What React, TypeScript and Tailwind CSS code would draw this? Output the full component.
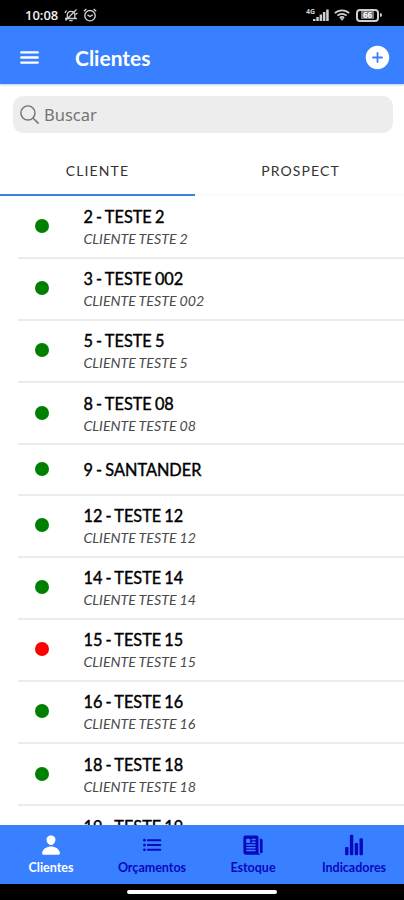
import { clsx } from "clsx";
import type { ReactNode } from "react";
import { IoAddCircle, IoList, IoMenu, IoNewspaper, IoPerson, IoSearchOutline, IoStatsChart } from "react-icons/io5";

type Customer = {
  id: number;
  name: string;
  description?: string;
  blocked?: boolean;
};

const customers: Customer[] = [
  { id: 2, name: "TESTE 2", description: "CLIENTE TESTE 2" },
  { id: 3, name: "TESTE 002", description: "CLIENTE TESTE 002" },
  { id: 5, name: "TESTE 5", description: "CLIENTE TESTE 5" },
  { id: 8, name: "TESTE 08", description: "CLIENTE TESTE 08" },
  { id: 9, name: "SANTANDER" },
  { id: 12, name: "TESTE 12", description: "CLIENTE TESTE 12" },
  { id: 14, name: "TESTE 14", description: "CLIENTE TESTE 14" },
  { id: 15, name: "TESTE 15", description: "CLIENTE TESTE 15", blocked: true },
  { id: 16, name: "TESTE 16", description: "CLIENTE TESTE 16" },
  { id: 18, name: "TESTE 18", description: "CLIENTE TESTE 18" },
  { id: 19, name: "TESTE 19", description: "CLIENTE TESTE 19" }
];

function StatusBar() {
  return (
    <div className="flex h-[26px] shrink-0 items-center bg-black pl-[25px] pr-[22px] pt-1 text-[#cfcfcf]">
      <span className="w-[39px] font-['Open_Sans',sans-serif] text-[13px] font-semibold leading-none text-[#eeeeee]">10:08</span>
      <svg className="h-[14px] w-[14px]" viewBox="0 0 14 14" fill="none" stroke="currentColor" strokeWidth="1.3" aria-hidden="true">
        <path d="M3.300 10.200V6.500a3.800 3.800 0 0 1 7.500 0v3.700M1 10.500h12M5.300 12.700h3.400M1.500 12.500 12.500 1.500M1 5l1.500-2.500M11.500 6.500 13.500 5" />
      </svg>
      <svg className="ml-[5px] h-[14px] w-[14px]" viewBox="0 0 14 14" fill="none" stroke="currentColor" strokeWidth="1.4" aria-hidden="true">
        <circle cx="7" cy="7.7" r="5.2" />
        <path d="M.8 3.300 3.400 1M13.200 3.300 10.600 1M4.500 6.800 7 8.500l2.700-1.700" />
      </svg>
      <div className="ml-auto flex items-center">
        <span className="-mr-[2px] -mt-[7px] font-['Open_Sans',sans-serif] text-[7px] font-bold leading-none">4G</span>
        <svg className="h-[12px] w-[16px]" viewBox="0 0 16 12" fill="currentColor" aria-hidden="true">
          <path d="M0 10h2.500v2H0zM3.300 8h2.500v4H3.300zM6.600 5.500h2.500V12H6.600zM9.900 3h2.500v9H9.900zM13.200 .5h2.500V12h-2.500z" />
        </svg>
        <svg className="ml-[5px] h-[12px] w-[16px]" viewBox="0 0 16 12" fill="none" stroke="currentColor" strokeWidth="1.7" aria-hidden="true">
          <path d="M.8 4.200a10.400 10.400 0 0 1 14.400 0M3.400 6.600a6.800 6.800 0 0 1 9.200 0M5.800 8.900a3.300 3.300 0 0 1 4.400 0" />
          <path d="m5.800 9.200 2.200 2.600 2.200-2.600z" fill="currentColor" stroke="none" />
        </svg>
        <div className="ml-[6px] flex h-[13px] w-[23px] items-center justify-center rounded-[4px] border-2 border-current">
          <span className="bg-[#777777] px-0.5 font-['Open_Sans',sans-serif] text-[8px] font-bold leading-[8px] text-white">66</span>
        </div>
        <div className="ml-px h-1 w-[2px] rounded-r bg-current" />
      </div>
    </div>
  );
}

function CustomerRow({ customer }: { customer: Customer }) {
  return (
    <li
      className={clsx(
        "ml-[18px] flex shrink-0 items-center border-b-2 border-[#ebebeb]",
        customer.description ? "h-[62.1px]" : "h-[50.6px]"
      )}
    >
      <span
        className={clsx("mb-px ml-[16.500px] h-[14px] w-[14px] rounded-full", customer.blocked ? "bg-[#ff0000]" : "bg-[#008000]")}
      />
      <div className="ml-[35px] pt-px">
        <p className="text-[16.3px] leading-[22px] text-black [-webkit-text-stroke:0.4px_black] [word-spacing:-1px]">
          {customer.id} - {customer.name}
        </p>
        {customer.description ? (
          <p className="mt-[2px] text-[14.2px] italic leading-[18px] text-[#4a4a4a] [word-spacing:-0.3px]">{customer.description}</p>
        ) : null}
      </div>
    </li>
  );
}

function NavItem({ icon, label, active }: { icon: ReactNode; label: string; active?: boolean }) {
  return (
    <button
      className={clsx(
        "flex flex-1 flex-col items-center pl-px pt-[9px] text-[12.5px] font-bold",
        active ? "text-white" : "text-[#0808c0]"
      )}
      type="button"
    >
      <span className="text-[22px]">{icon}</span>
      <span className="mt-[4px] leading-4">{label}</span>
    </button>
  );
}

export default function App() {
  return (
    <div className="flex h-[900px] w-[404px] flex-col overflow-hidden bg-white font-['Lato',sans-serif]">
      <StatusBar />
      <header className="flex h-[58px] shrink-0 items-center bg-[#3880ff] pl-[17px] pr-[12px] pt-[5px] text-white shadow-[0_1px_2px_#3880ff66]">
        <IoMenu className="h-[25px] w-[25px]" aria-hidden="true" />
        <h1 className="ml-[33px] text-[21px] font-bold leading-none">Clientes</h1>
        <IoAddCircle className="ml-auto h-[29px] w-[29px]" aria-hidden="true" />
      </header>

      <div className="ml-[13px] mr-[11px] mt-[12px] flex h-[37px] shrink-0 items-center rounded-[10px] bg-[#ededed] pl-[5px] text-[#747474]">
        <IoSearchOutline className="h-[23px] w-[23px]" aria-hidden="true" />
        <input
          className="ml-[3px] min-w-0 flex-1 bg-transparent pt-0.5 font-['Noto_Sans',sans-serif] text-[16.5px] outline-none placeholder:text-[#747474]"
          placeholder="Buscar"
        />
      </div>

      <div className="mt-[14px] flex h-[49px] shrink-0 text-[14px] tracking-[1.1px] text-[#333333]">
        <button className="w-[195px] border-b-2 border-[#3f7fe0]" type="button">
          CLIENTE
        </button>
        <button className="flex-1 border-b-2 border-[#fafafa] pl-0.5" type="button">
          PROSPECT
        </button>
      </div>

      <ul className="flex min-h-0 flex-1 flex-col overflow-hidden pt-[0.7px]">
        {customers.map((customer) => (
          <CustomerRow customer={customer} key={customer.id} />
        ))}
      </ul>

      <nav className="flex h-[59px] shrink-0 bg-[#3880ff]">
        <NavItem icon={<IoPerson />} label="Clientes" active />
        <NavItem icon={<IoList />} label="Orçamentos" />
        <NavItem icon={<IoNewspaper />} label="Estoque" />
        <NavItem icon={<IoStatsChart />} label="Indicadores" />
      </nav>
      <div className="flex h-4 shrink-0 justify-center bg-black pt-[6px]">
        <div className="h-[4px] w-[150px] rounded-full bg-white" />
      </div>
    </div>
  );
}
